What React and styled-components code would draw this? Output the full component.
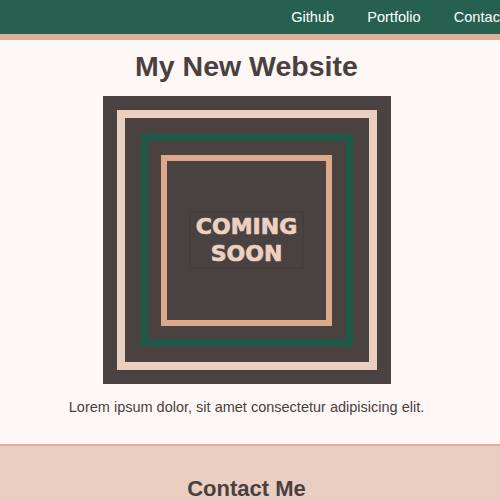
import React from 'react'
import styled, { createGlobalStyle } from 'styled-components'

const GlobalStyle = createGlobalStyle`
  html, body {
    margin: 0;
    padding: 0;
    overflow-x: hidden;
  }
  body {
    background: #fdf8f5;
    font-family: "Liberation Sans", Arial, sans-serif;
    color: #4a4040;
  }
`

const Nav = styled.nav`
  height: 34px;
  background: #266150;
  border-bottom: 6px solid #ddb096;
  display: flex;
  align-items: center;
  justify-content: flex-end;
  overflow: hidden;
`

const NavList = styled.ul`
  list-style: none;
  display: flex;
  gap: 33px;
  margin: 0 -4px 0 0;
  padding: 0;
`

const NavLink = styled.a`
  color: #fff;
  font-size: 14.6px;
  text-decoration: none;
  white-space: nowrap;
`

const Main = styled.main`
  display: flex;
  flex-direction: column;
  align-items: center;
  padding: 10px 7px 29px 0;
`

const Title = styled.h1`
  margin: 0 0 14px;
  font-size: 28.5px;
  font-weight: 700;
  line-height: 32px;
`

const Art = styled.div`
  width: 288px;
  height: 288px;
  background: #4a4241;
  display: flex;
  align-items: center;
  justify-content: center;
`

const Frame = styled.div`
  box-sizing: border-box;
  width: ${p => p.$size}px;
  height: ${p => p.$size}px;
  border: ${p => p.$line}px solid ${p => p.$color};
  display: flex;
  align-items: center;
  justify-content: center;
`

const Badge = styled.div`
  border: 2px solid #463e3c;
  padding: 0 5px;
  color: #ecd0c0;
  font-family: "DejaVu Sans", sans-serif;
  font-weight: 700;
  font-size: 22px;
  line-height: 27px;
  text-align: center;
  -webkit-text-stroke: 0.7px #ecd0c0;
`

const Lead = styled.p`
  margin: 15px 0 0;
  font-size: 14.5px;
`

const Footer = styled.footer`
  background: #e9cec1;
  border-top: 2px solid #dcae94;
  display: flex;
  justify-content: center;
  padding: 30px 7px 0 0;
`

const FooterTitle = styled.h2`
  margin: 0;
  font-size: 22px;
  font-weight: 700;
`

export default function App() {
  return (
    <>
      <GlobalStyle />
      <Nav>
        <NavList>
          <li><NavLink href="#">Github</NavLink></li>
          <li><NavLink href="#">Portfolio</NavLink></li>
          <li><NavLink href="#">Contact</NavLink></li>
        </NavList>
      </Nav>
      <Main>
        <Title>My New Website</Title>
        <Art>
          <Frame $size={260} $line={8} $color="#ebcfc1">
            <Frame $size={212} $line={7} $color="#1f5a48">
              <Frame $size={171} $line={6} $color="#dea98b">
                <Badge>COMING<br />SOON</Badge>
              </Frame>
            </Frame>
          </Frame>
        </Art>
        <Lead>Lorem ipsum dolor, sit amet consectetur adipisicing elit.</Lead>
      </Main>
      <Footer>
        <FooterTitle>Contact Me</FooterTitle>
      </Footer>
    </>
  )
}
